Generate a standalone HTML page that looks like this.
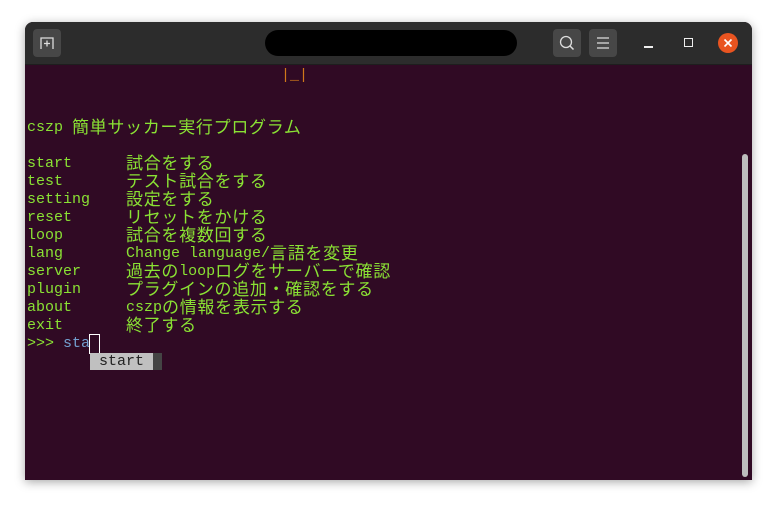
<!DOCTYPE html>
<html><head><meta charset="utf-8"><style>
body{margin:0;width:777px;height:509px;background:#fff;position:relative;overflow:hidden;font-family:"Liberation Mono","Noto Sans CJK JP",monospace}
.win{position:absolute;left:25px;top:22px;width:727px;height:458px;border-radius:8px 8px 0 0;background:#300a24;box-shadow:0 2px 10px rgba(0,0,0,.35);overflow:hidden}
.tb{position:absolute;left:0;top:0;width:727px;height:42px;background:#2c2c2c;border-bottom:1px solid #1e1e1e}
.btn{position:absolute;top:7px;width:28px;height:28px;background:#474747;border-radius:4px}
.t{position:absolute;left:2px;font-size:15px;line-height:18px;height:18px;color:#8ae234;white-space:pre}
.t span{position:absolute;left:99px;top:0}
i{font-style:normal;font-family:"Noto Sans CJK JP",sans-serif;font-size:17px;letter-spacing:0.7px;line-height:18px;display:inline-block;vertical-align:top;position:relative;top:-2px}
</style></head><body>
<div class="win">
<div class="tb">
 <div class="btn" style="left:8px"><svg width="28" height="28"><path d="M8 20V9h12v11" fill="none" stroke="#ddd" stroke-width="1.3"/><path d="M14 11.5v6M11 14.5h6" stroke="#ddd" stroke-width="1.3"/></svg></div>
 <div style="position:absolute;left:240px;top:8px;width:252px;height:26px;background:#000;border-radius:13px"></div>
 <div class="btn" style="left:528px"><svg width="28" height="28"><circle cx="13" cy="13" r="5.5" fill="none" stroke="#ddd" stroke-width="1.3"/><path d="M17 17l3.5 3.5" stroke="#ddd" stroke-width="1.5"/></svg></div>
 <div class="btn" style="left:564px"><svg width="28" height="28"><path d="M8 9h12M8 14h12M8 19h12" stroke="#ddd" stroke-width="1.2"/></svg></div>
 <div style="position:absolute;left:619px;top:24px;width:9px;height:1.5px;background:#eee"></div>
 <div style="position:absolute;left:659px;top:16px;width:7px;height:7px;border:1.3px solid #eee"></div>
 <div style="position:absolute;left:693px;top:11px;width:20px;height:20px;border-radius:50%;background:#e95420"><svg width="20" height="20"><path d="M6.5 6.5l7 7M13.5 6.5l-7 7" stroke="#fff" stroke-width="1.6"/></svg></div>
</div>
<div class="t" style="left:256px;top:45px;color:#d0781a">|_|</div>
<div class="t" style="top:97px">cszp <i>簡単サッカー実行プログラム</i></div>
<div class="t" style="top:133px">start<span><i>試合をする</i></span></div>
<div class="t" style="top:151px">test<span><i>テスト試合をする</i></span></div>
<div class="t" style="top:169px">setting<span><i>設定をする</i></span></div>
<div class="t" style="top:187px">reset<span><i>リセットをかける</i></span></div>
<div class="t" style="top:205px">loop<span><i>試合を複数回する</i></span></div>
<div class="t" style="top:223px">lang<span>Change language/<i>言語を変更</i></span></div>
<div class="t" style="top:241px">server<span><i>過去の</i>loop<i>ログをサーバーで確認</i></span></div>
<div class="t" style="top:259px">plugin<span><i>プラグインの追加・確認をする</i></span></div>
<div class="t" style="top:277px">about<span>cszp<i>の情報を表示する</i></span></div>
<div class="t" style="top:295px">exit<span><i>終了する</i></span></div>
<div class="t" style="top:313px">&gt;&gt;&gt; <b style="font-weight:normal;color:#729fcf">sta</b></div>
<div style="position:absolute;left:64px;top:312px;width:9px;height:18px;border:1px solid #fff"></div>
<div style="position:absolute;left:65px;top:331px;width:63px;height:17px;background:#c0c0c0;color:#222;font-size:15px;line-height:18px;padding-left:9px;box-sizing:border-box">start</div>
<div style="position:absolute;left:128px;top:331px;width:9px;height:17px;background:#444"></div>
<div style="position:absolute;left:717px;top:132px;width:6px;height:323px;background:#bdbdbd;border-radius:3px"></div>
</div>
</body></html>
